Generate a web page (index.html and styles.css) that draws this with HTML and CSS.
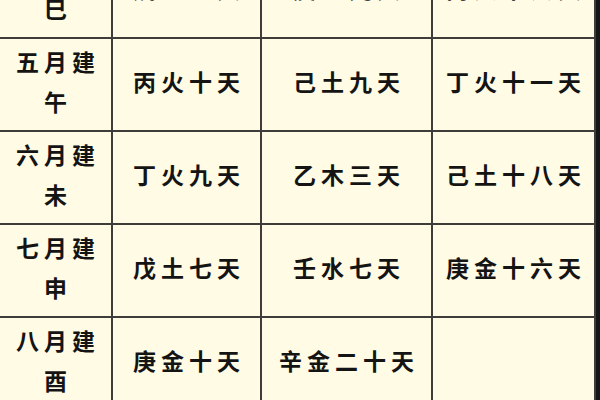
FILE: index.html
```html
<!DOCTYPE html>
<html lang="zh">
<head>
<meta charset="utf-8">
<link rel="stylesheet" href="styles.css">
</head>
<body>
<div class="table">
  <div class="cell head">四月建<br>巳</div>
  <div class="cell">戊土五天</div>
  <div class="cell">庚金九天</div>
  <div class="cell">丙火十六天</div>

  <div class="cell head">五月建<br>午</div>
  <div class="cell">丙火十天</div>
  <div class="cell">己土九天</div>
  <div class="cell">丁火十一天</div>

  <div class="cell head">六月建<br>未</div>
  <div class="cell">丁火九天</div>
  <div class="cell">乙木三天</div>
  <div class="cell">己土十八天</div>

  <div class="cell head">七月建<br>申</div>
  <div class="cell">戊土七天</div>
  <div class="cell">壬水七天</div>
  <div class="cell">庚金十六天</div>

  <div class="cell head">八月建<br>酉</div>
  <div class="cell">庚金十天</div>
  <div class="cell">辛金二十天</div>
  <div class="cell"></div>
</div>
</body>
</html>
```

FILE: styles.css
```css
html, body {
  margin: 0;
  padding: 0;
}
body {
  background: #161616;
  width: 600px;
  height: 400px;
  overflow: hidden;
}
.table {
  display: grid;
  grid-template-columns: 111px 147px 169px 161px;
  grid-auto-rows: 91px;
  gap: 2px;
  padding: 2px;
  background: #3e3d39;
  width: max-content;
  margin-top: -56px;
  margin-left: -2px;
}
.cell {
  background: #fffbe5;
  display: flex;
  align-items: center;
  justify-content: center;
  text-align: center;
  font-family: "Noto Sans CJK SC", "Noto Sans CJK TC", sans-serif;
  font-size: 23px;
  font-weight: 700;
  color: #141414;
  letter-spacing: 5px;
  padding-left: 5px;
  padding-bottom: 8px;
}
.head {
  line-height: 40px;
}
```
